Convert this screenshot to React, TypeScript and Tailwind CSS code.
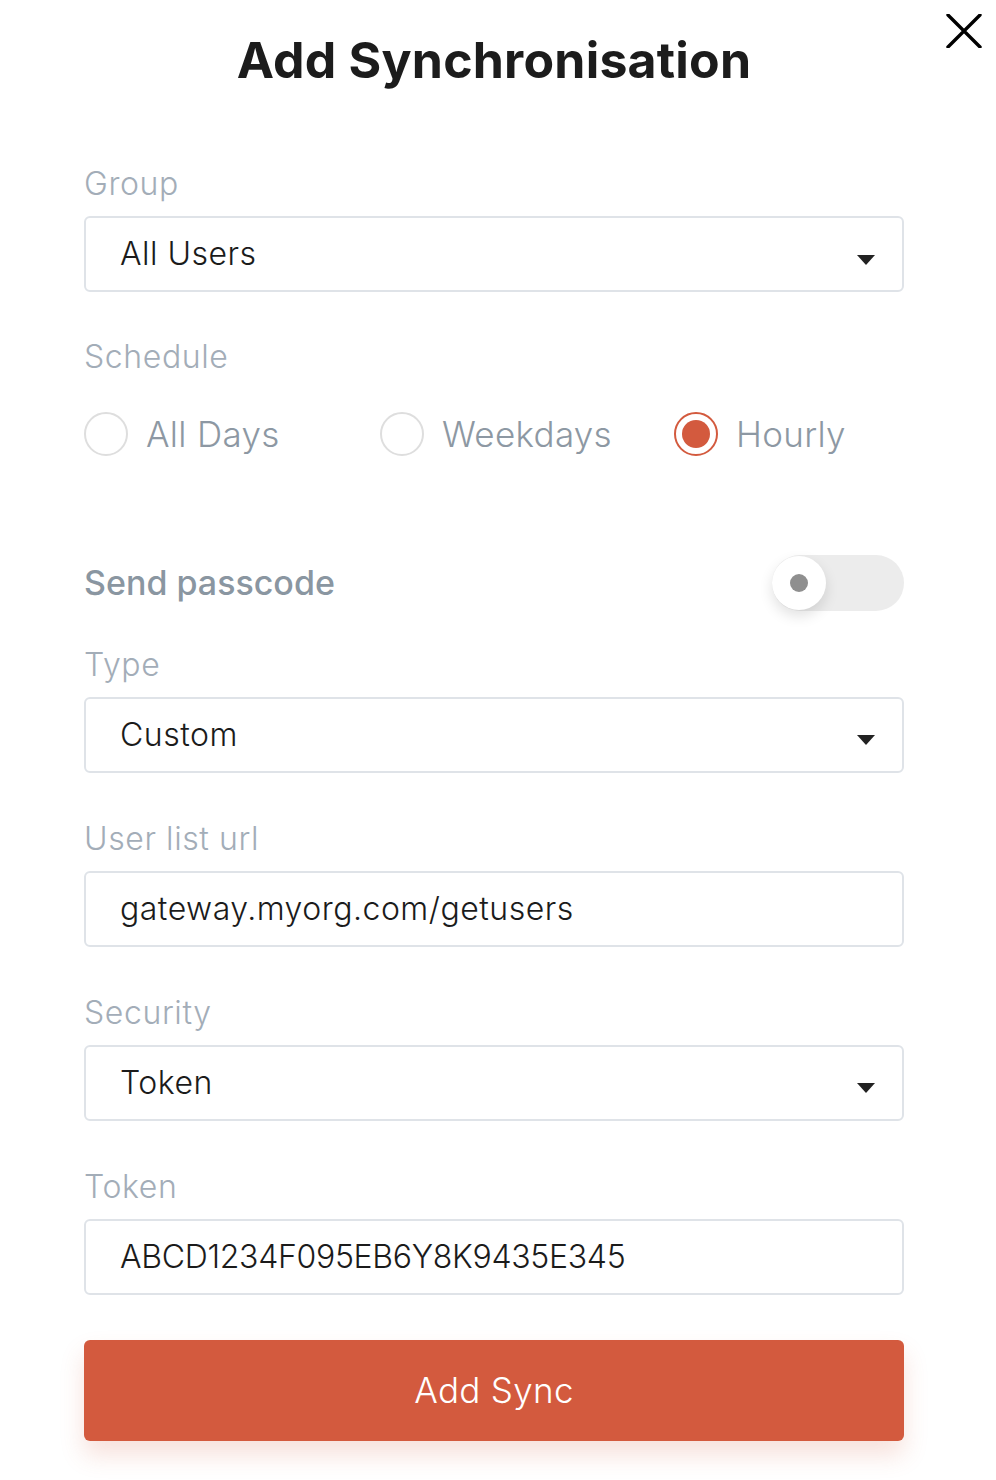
import React from "react";

const font = { fontFamily: "Inter, 'Noto Sans', sans-serif" };

function Label({ children }: { children: React.ReactNode }) {
  return (
    <div className="text-[32px] font-light leading-none tracking-[0.6px] text-[#a3adb8] h-[32px] flex items-center">
      {children}
    </div>
  );
}

function Caret() {
  return (
    <svg width="18" height="10" viewBox="0 0 18 10" className="shrink-0 mt-[11px]">
      <path d="M0 0 H18 L9 10 Z" fill="#222" />
    </svg>
  );
}

function SelectBox({ value }: { value: string }) {
  return (
    <div className="h-[76px] w-full rounded-[6px] border-2 border-[#dfe3e8] bg-white flex items-center justify-between pl-[34px] pr-[27px]">
      <span className="text-[32px] font-light tracking-[0.5px] text-[#1b1b1b]">{value}</span>
      <Caret />
    </div>
  );
}

function TextBox({ value, tracking = "tracking-[0.5px]" }: { value: string; tracking?: string }) {
  return (
    <div className="h-[76px] w-full rounded-[6px] border-2 border-[#dfe3e8] bg-white flex items-center pl-[34px]">
      <span className={`text-[32px] font-light text-[#1b1b1b] ${tracking}`}>{value}</span>
    </div>
  );
}

function Radio({ label, checked, width }: { label: string; checked?: boolean; width: string }) {
  return (
    <div className={`flex items-center gap-[18px] shrink-0 ${width}`}>
      <div
        className={`w-[44px] h-[44px] rounded-full border-2 flex items-center justify-center ${
          checked ? "border-[#d35a3e]" : "border-[#dedede]"
        }`}
      >
        {checked && <div className="w-[28px] h-[28px] rounded-full bg-[#d35a3e]" />}
      </div>
      <span className="text-[35px] font-light tracking-[0.3px] text-[#8d98a3]">{label}</span>
    </div>
  );
}

export default function App() {
  return (
    <div className="w-[996px] h-[1480px] bg-white relative" style={font}>
      <button className="absolute right-[14px] top-[14px] w-[36px] h-[34px]">
        <svg viewBox="0 0 36 34" width="36" height="34">
          <path d="M2 1 L34 33 M34 1 L2 33" stroke="#000" strokeWidth="3.4" strokeLinecap="round" />
        </svg>
      </button>

      <div className="ml-[84px] w-[820px] pt-[32px] flex flex-col">
        <h1 className="text-center font-bold text-[50px] leading-[56px] text-[#1c1c1c] tracking-[0.2px]">
          Add Synchronisation
        </h1>

        <div className="mt-[80px]">
          <Label>Group</Label>
          <div className="mt-[16px]">
            <SelectBox value="All Users" />
          </div>
        </div>

        <div className="mt-[49px]">
          <Label>Schedule</Label>
          <div className="mt-[35px] flex items-center">
            <Radio label="All Days" width="w-[296px]" />
            <Radio label="Weekdays" width="w-[294px]" />
            <Radio label="Hourly" checked width="w-[230px]" />
          </div>
        </div>

        <div className="mt-[94px] flex items-center justify-between">
          <span className="text-[34px] font-medium text-[#8a96a1]">Send passcode</span>
          <div className="w-[132px] h-[56px] rounded-full bg-[#ececec] relative">
            <div className="absolute left-0 top-[1px] w-[54px] h-[54px] rounded-full bg-white shadow-[0_6px_14px_rgba(0,0,0,0.12)] flex items-center justify-center">
              <div className="w-[18px] h-[18px] rounded-full bg-[#8f8f8f]" />
            </div>
          </div>
        </div>

        <div className="mt-[38px]">
          <Label>Type</Label>
          <div className="mt-[16px]">
            <SelectBox value="Custom" />
          </div>
        </div>

        <div className="mt-[50px]">
          <Label>User list url</Label>
          <div className="mt-[16px]">
            <TextBox value="gateway.myorg.com/getusers" />
          </div>
        </div>

        <div className="mt-[50px]">
          <Label>Security</Label>
          <div className="mt-[16px]">
            <SelectBox value="Token" />
          </div>
        </div>

        <div className="mt-[50px]">
          <Label>Token</Label>
          <div className="mt-[16px]">
            <TextBox value="ABCD1234F095EB6Y8K9435E345" tracking="tracking-[-0.3px]" />
          </div>
        </div>

        <button className="mt-[45px] h-[101px] w-full rounded-[6px] bg-[#d35a3e] text-white text-[35px] font-light tracking-[0.3px] shadow-[0_14px_24px_rgba(211,90,62,0.18)]">
          Add Sync
        </button>
      </div>
    </div>
  );
}
